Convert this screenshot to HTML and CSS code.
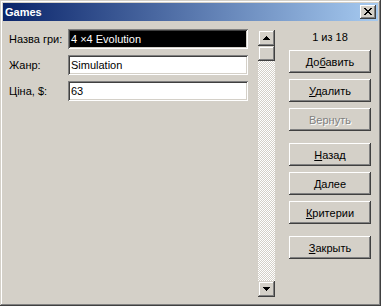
FILE: index.html
```html
<!DOCTYPE html>
<html>
<head>
<meta charset="utf-8">
<link rel="stylesheet" href="styles.css">
</head>
<body>
<div class="window">
  <div class="titlebar">
    <span class="title">Games</span>
    <span class="close">
      <svg width="8" height="7" viewBox="0 0 8 7" shape-rendering="crispEdges"><path d="M0 0h2v1H0zM6 0h2v1H6zM1 1h2v1H1zM5 1h2v1H5zM2 2h4v1H2zM3 3h2v1H3zM2 4h4v1H2zM1 5h2v1H1zM5 5h2v1H5zM0 6h2v1H0zM6 6h2v1H6z" fill="#000"/></svg>
    </span>
  </div>
  <div class="client">
    <div class="form">
      <div class="row"><span class="label">Назва гри:</span><div class="field selected">4 ×4 Evolution</div></div>
      <div class="row"><span class="label">Жанр:</span><div class="field">Simulation</div></div>
      <div class="row"><span class="label">Ціна, $:</span><div class="field">63</div></div>
    </div>
    <div class="scrollbar">
      <div class="sb-btn">
        <svg width="7" height="4" viewBox="0 0 7 4" shape-rendering="crispEdges"><path d="M3 0h1v1H3zM2 1h3v1H2zM1 2h5v1H1zM0 3h7v1H0z" fill="#000"/></svg>
      </div>
      <div class="sb-thumb"></div>
      <div class="sb-track"></div>
      <div class="sb-btn">
        <svg width="7" height="4" viewBox="0 0 7 4" shape-rendering="crispEdges"><path d="M0 0h7v1H0zM1 1h5v1H1zM2 2h3v1H2zM3 3h1v1H3z" fill="#000"/></svg>
      </div>
    </div>
    <div class="actions">
      <div class="counter">1 из 18</div>
      <div class="group">
        <button class="btn">До<u>б</u>авить</button>
        <button class="btn"><u>У</u>далить</button>
        <button class="btn disabled">Вернуть</button>
      </div>
      <div class="group">
        <button class="btn"><u>Н</u>азад</button>
        <button class="btn"><u>Д</u>алее</button>
        <button class="btn"><u>К</u>ритерии</button>
      </div>
      <div class="group">
        <button class="btn"><u>З</u>акрыть</button>
      </div>
    </div>
  </div>
</div>
</body>
</html>
```

FILE: styles.css
```css
html, body {
  margin: 0;
  padding: 0;
  background: #d4d0c8;
}

.window {
  width: 381px;
  height: 306px;
  box-sizing: border-box;
  padding: 3px;
  background: #d4d0c8;
  box-shadow: inset -1px -1px #404040, inset 1px 1px #d4d0c8, inset -2px -2px #808080, inset 2px 2px #ffffff;
  display: flex;
  flex-direction: column;
  font-family: "Liberation Sans", Arial, sans-serif;
  font-size: 11px;
  color: #000;
}

.titlebar {
  height: 18px;
  background: linear-gradient(to right, #0a246a, #a6caf0);
  display: flex;
  align-items: center;
  justify-content: space-between;
  padding: 0 2px 0 2px;
}

.title {
  color: #fff;
  font-weight: bold;
  font-size: 11px;
  line-height: 18px;
}

.close {
  width: 16px;
  height: 14px;
  background: #d4d0c8;
  box-shadow: inset -1px -1px #404040, inset 1px 1px #ffffff, inset -2px -2px #808080, inset 2px 2px #d4d0c8;
  display: flex;
  align-items: center;
  justify-content: center;
}

.close svg {
  display: block;
  margin: 0 1px 1px 0;
}

.client {
  flex: 1;
  display: flex;
  align-items: flex-start;
}

.form {
  margin: 8px 0 0 6px;
  display: flex;
  flex-direction: column;
  gap: 6px;
}

.row {
  display: flex;
  align-items: center;
}

.label {
  width: 59px;
  line-height: 13px;
}

.field {
  width: 180px;
  height: 20px;
  box-sizing: border-box;
  padding: 0 3px;
  background: #fff;
  box-shadow: inset 1px 1px #808080, inset -1px -1px #ffffff, inset 2px 2px #404040, inset -2px -2px #d4d0c8;
  line-height: 20px;
  white-space: nowrap;
}

.field.selected {
  background: #000;
  color: #fff;
}

.scrollbar {
  margin: 9px 0 0 10px;
  width: 17px;
  height: 267px;
  display: flex;
  flex-direction: column;
}

.sb-btn,
.sb-thumb {
  flex: none;
  background: #d4d0c8;
  box-shadow: inset -1px -1px #404040, inset 1px 1px #d4d0c8, inset -2px -2px #808080, inset 2px 2px #ffffff;
}

.sb-btn {
  height: 16px;
  display: flex;
  align-items: center;
  justify-content: center;
}

.sb-btn svg {
  display: block;
}

.sb-thumb {
  height: 15px;
}

.sb-track {
  flex: 1;
  background: repeating-conic-gradient(#ffffff 0 25%, #d4d0c8 0 50%) 0 0 / 2px 2px;
}

.actions {
  margin: 10px 0 0 14px;
  width: 82px;
  display: flex;
  flex-direction: column;
}

.counter {
  text-align: center;
  line-height: 13px;
  margin-bottom: 6px;
}

.group {
  display: flex;
  flex-direction: column;
  gap: 6px;
  margin-bottom: 12px;
}

.btn {
  width: 82px;
  height: 23px;
  padding: 0;
  border: none;
  background: #d4d0c8;
  box-shadow: inset -1px -1px #404040, inset 1px 1px #ffffff, inset -2px -2px #808080, inset 2px 2px #d4d0c8;
  font-family: "Liberation Sans", Arial, sans-serif;
  font-size: 11px;
  color: #000;
  text-align: center;
}

.btn.disabled {
  color: #808080;
  text-shadow: 1px 1px #ffffff;
}
```
